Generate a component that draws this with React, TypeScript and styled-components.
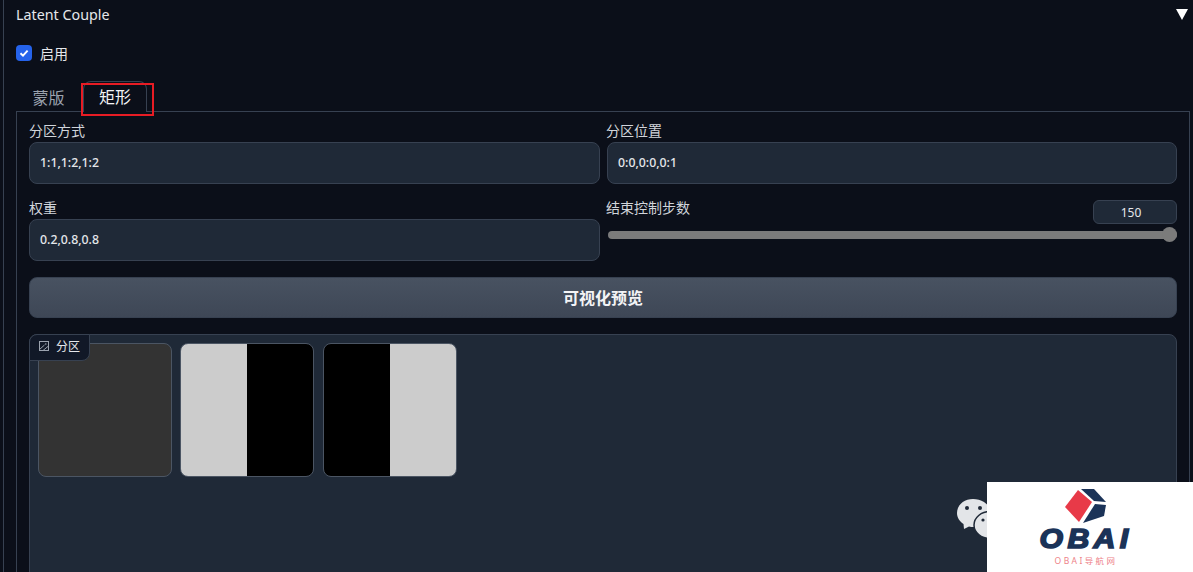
import React from 'react';
import styled, { createGlobalStyle } from 'styled-components';

const FONT = `"Noto Sans", "Noto Sans CJK SC", "Liberation Sans", sans-serif`;

const Global = createGlobalStyle`
  html, body { margin: 0; padding: 0; background: #0b0f19; }
  * { box-sizing: border-box; }
`;

const Page = styled.div`
  position: relative;
  width: 1193px;
  height: 572px;
  overflow: hidden;
  background: #0b0f19;
  font-family: ${FONT};
  color: #e5e7eb;
  padding-left: 3px;
`;

const Accordion = styled.div`
  height: 572px;
  border-left: 1px solid #374151;
  padding: 0 4px 0 12px;
`;

const Header = styled.div`
  display: flex;
  justify-content: space-between;
  align-items: center;
  height: 28px;
  font-size: 14.3px;
  color: #e5e7eb;
`;

const Caret = styled.div`
  width: 0;
  height: 0;
  margin-right: 1px;
  border-left: 6px solid transparent;
  border-right: 6px solid transparent;
  border-top: 11px solid #fff;
`;

const EnableRow = styled.label`
  display: flex;
  align-items: center;
  gap: 8px;
  height: 18px;
  margin-top: 16px;
  font-size: 14px;
`;

const CheckBox = styled.span`
  display: flex;
  align-items: center;
  justify-content: center;
  width: 16px;
  height: 16px;
  border-radius: 4px;
  background: #2563eb;
`;

const TabBar = styled.div`
  display: flex;
  height: 30px;
  margin-top: 20px;
`;

const Tab = styled.div<{ $active?: boolean }>`
  position: relative;
  width: ${p => (p.$active ? '64px' : '65px')};
  height: ${p => (p.$active ? '31px' : '30px')};
  margin-top: ${p => (p.$active ? '-1px' : '0')};
  margin-left: ${p => (p.$active ? '2px' : '0')};
  padding-bottom: 2px;
  display: flex;
  align-items: center;
  justify-content: center;
  font-size: 16px;
  color: ${p => (p.$active ? '#f3f4f6' : '#9ca3af')};
  border: 1px solid ${p => (p.$active ? '#374151' : 'transparent')};
  border-bottom: none;
  border-radius: 8px 8px 0 0;
  background: ${p => (p.$active ? '#0b0f19' : 'transparent')};
  z-index: 1;
`;

const Highlight = styled.div`
  position: absolute;
  left: -3px;
  top: 1px;
  width: 73px;
  height: 33px;
  border: 2px solid #e81c24;
`;

const Panel = styled.div`
  width: 1174px;
  height: 480px;
  margin-top: -1px;
  border: 1px solid #374151;
  padding: 11px 12px 0;
`;

const FieldGrid = styled.div`
  display: grid;
  grid-template-columns: 571px 570px;
  column-gap: 7px;
  row-gap: 13px;
`;

const Field = styled.div`
  display: flex;
  flex-direction: column;
  height: 64px;
`;

const Label = styled.div<{ $offset?: number }>`
  height: 19px;
  line-height: 16px;
  font-size: 14px;
  color: #d1d5db;
  margin-left: ${p => p.$offset ?? 0}px;
`;

const Input = styled.div`
  height: 42px;
  padding: 0 0 2px 10px;
  display: flex;
  align-items: center;
  font-size: 12.3px;
  font-weight: 500;
  color: #e5e7eb;
  background: #1f2937;
  border: 1px solid #374151;
  border-radius: 8px;
`;

const SliderHead = styled.div`
  display: flex;
  justify-content: space-between;
  height: 25px;
`;

const NumberBox = styled.div`
  width: 84px;
  height: 24px;
  padding-right: 8px;
  display: flex;
  align-items: center;
  justify-content: center;
  font-size: 12px;
  color: #e5e7eb;
  background: #1f2937;
  border: 1px solid #374151;
  border-radius: 6px;
`;

const Track = styled.div`
  position: relative;
  height: 8px;
  margin-top: 6px;
  margin-left: 1px;
  border-radius: 4px;
  background: #7b7b7b;
`;

const Thumb = styled.div`
  position: absolute;
  right: 0;
  top: -4px;
  width: 15px;
  height: 15px;
  border-radius: 50%;
  background: #7b7b7b;
`;

const Button = styled.div`
  height: 41px;
  margin-top: 13px;
  padding-bottom: 2px;
  display: flex;
  align-items: center;
  justify-content: center;
  font-size: 16px;
  font-weight: 700;
  color: #f3f4f6;
  background: linear-gradient(to bottom, #485261, #3e4756);
  border: 1px solid #374151;
  border-radius: 8px;
`;

const Gallery = styled.div`
  position: relative;
  height: 300px;
  margin-top: 16px;
  padding: 8px;
  display: flex;
  gap: 8.4px;
  background: #1f2937;
  border: 1px solid #374151;
  border-radius: 8px 8px 0 0;
`;

const GalleryTag = styled.div`
  position: absolute;
  left: -1px;
  top: -1px;
  width: 61px;
  height: 27px;
  padding: 0 0 3px 9px;
  display: flex;
  align-items: center;
  gap: 7px;
  font-size: 12px;
  color: #e5e7eb;
  background: #111827;
  border: 1px solid #374151;
  border-radius: 8px 0 8px 0;
`;

const Thumbnail = styled.div<{ $bg: string }>`
  width: 134px;
  height: 134px;
  flex: none;
  background: ${p => p.$bg};
  border: 1px solid #4b5563;
  border-radius: 8px;
`;

const Watermark = styled.div`
  position: absolute;
  right: 0;
  bottom: 0;
  width: 206px;
  height: 90px;
  background: #fff;
  display: flex;
  flex-direction: column;
  align-items: center;
`;

const WeChat = styled.svg`
  position: absolute;
  left: 957px;
  top: 499px;
`;

const Cube = styled.svg`
  margin-top: 7px;
  margin-left: -8px;
  flex: none;
`;

const LogoWord = styled.div`
  margin-top: 2px;
  margin-left: -8px;
  height: 24px;
  line-height: 24px;
  font-family: "Liberation Sans", sans-serif;
  font-size: 28px;
  font-weight: 700;
  font-style: italic;
  letter-spacing: 4px;
  color: #1b3358;
  -webkit-text-stroke: 1.6px #1b3358;
  transform: scaleX(1.08);
`;

const LogoSub = styled.div`
  margin-top: 4px;
  margin-left: -8px;
  font-size: 8.5px;
  line-height: 11px;
  letter-spacing: 2.4px;
  color: #ee7f88;
`;

const split = (left: string, right: string) =>
  `linear-gradient(to right, ${left} 50%, ${right} 50%)`;

export default function App() {
  return (
    <Page>
      <Global />
      <Accordion>
        <Header>
          <span>Latent Couple</span>
          <Caret />
        </Header>
        <EnableRow>
          <CheckBox>
            <svg width="10" height="10" viewBox="0 0 10 10" fill="none">
              <path d="M1.5 5.2 L4 7.6 L8.6 2.6" stroke="#fff" strokeWidth="1.9" />
            </svg>
          </CheckBox>
          启用
        </EnableRow>
        <TabBar>
          <Tab>蒙版</Tab>
          <Tab $active>
            矩形
            <Highlight />
          </Tab>
        </TabBar>
        <Panel>
          <FieldGrid>
            <Field>
              <Label>分区方式</Label>
              <Input>1:1,1:2,1:2</Input>
            </Field>
            <Field>
              <Label $offset={-1}>分区位置</Label>
              <Input>0:0,0:0,0:1</Input>
            </Field>
            <Field>
              <Label>权重</Label>
              <Input>0.2,0.8,0.8</Input>
            </Field>
            <Field>
              <SliderHead>
                <Label $offset={-1}>结束控制步数</Label>
                <NumberBox>150</NumberBox>
              </SliderHead>
              <Track>
                <Thumb />
              </Track>
            </Field>
          </FieldGrid>
          <Button>可视化预览</Button>
          <Gallery>
            <GalleryTag>
              <svg width="10" height="10" viewBox="0 0 10 10" fill="none" stroke="#9ca3af">
                <rect x="0.5" y="0.5" width="9" height="9" />
                <circle cx="6.8" cy="3" r="0.8" fill="#9ca3af" stroke="none" />
                <path d="M0.5 8.5 L5.5 4 M4 9.5 L9.5 5" />
              </svg>
              分区
            </GalleryTag>
            <Thumbnail $bg="#333333" />
            <Thumbnail $bg={split('#cccccc', '#000000')} />
            <Thumbnail $bg={split('#000000', '#cccccc')} />
          </Gallery>
        </Panel>
      </Accordion>
      <WeChat width="36" height="40" viewBox="0 0 36 40">
        <path
          d="M16 0 C7 0 0 6 0 14 C0 18.5 2.5 22.5 6.5 25 L7 30 L12 27.4 C13.5 27.8 15 28 16.5 28 C26 28 34 21.5 34 14 C34 6 25 0 16 0 Z"
          fill="#e3e5e8"
        />
        <circle cx="10" cy="9" r="2" fill="#1f2937" />
        <circle cx="23" cy="9" r="2" fill="#1f2937" />
        <ellipse cx="33" cy="26" rx="16" ry="13.5" fill="#e3e5e8" stroke="#1f2937" strokeWidth="1.5" />
        <circle cx="26" cy="21" r="1.6" fill="#1f2937" />
      </WeChat>
      <Watermark>
        <Cube width="44" height="36" viewBox="0 0 44 36">
          <path d="M14 1 L1 18 L15 33 L28 13 Z" fill="#e83a48" />
          <path d="M17 0 L30 12 L42 13 L30 0 Z" fill="#1b3358" />
          <path d="M31 15 L42 16 L40 27 L19 34 Z" fill="#1b3358" />
        </Cube>
        <LogoWord>OBAI</LogoWord>
        <LogoSub>OBAI导航网</LogoSub>
      </Watermark>
    </Page>
  );
}
